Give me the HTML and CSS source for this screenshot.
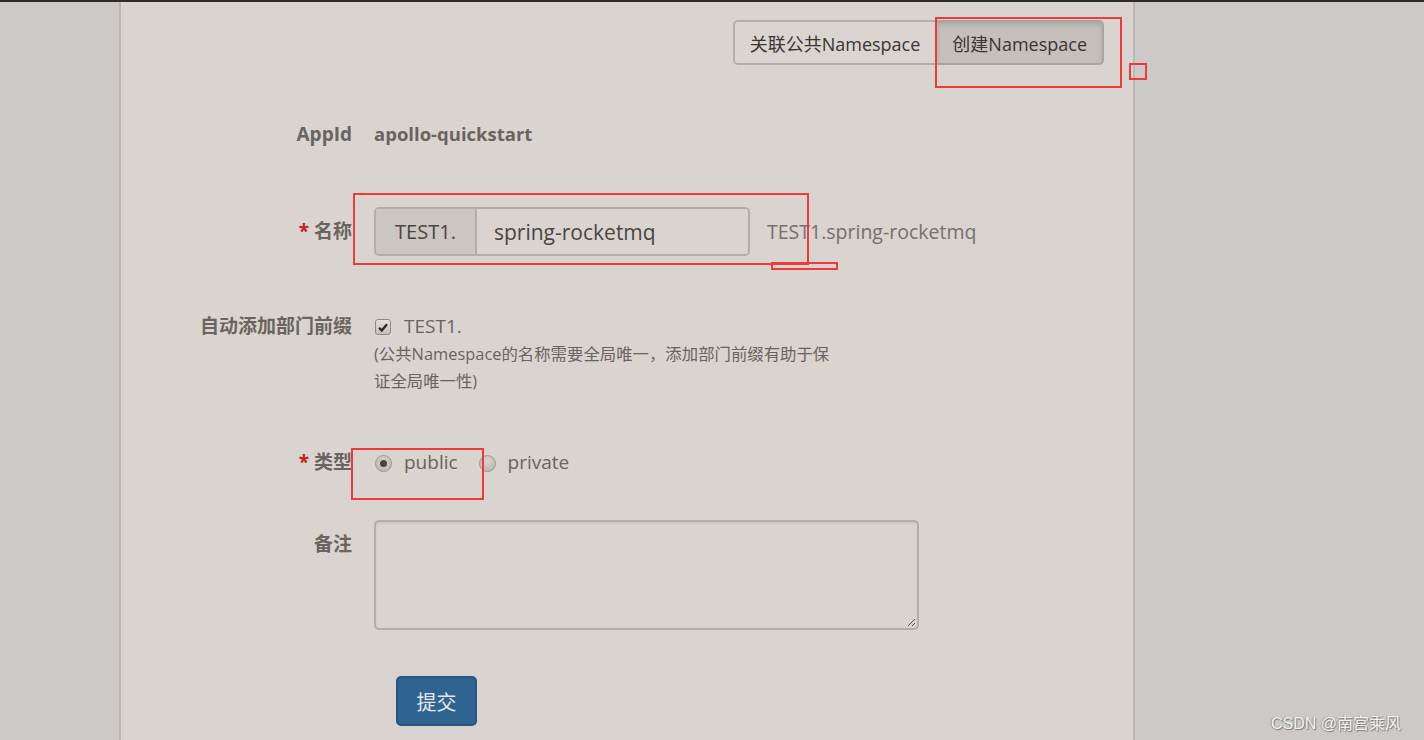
FILE: index.html
```html
<!DOCTYPE html>
<html lang="zh">
<head>
<meta charset="utf-8">
<title>创建Namespace</title>
<link rel="stylesheet" href="styles.css">
</head>
<body>
<div class="topbar"></div>
<div class="panel">
  <div class="header">
    <div class="btn-group">
      <button class="seg">关联公共Namespace</button>
      <button class="seg active">创建Namespace</button>
    </div>
  </div>
  <form class="form">
    <div class="row r-appid">
      <div class="label">AppId</div>
      <div class="value strong">apollo-quickstart</div>
    </div>
    <div class="row r-name">
      <div class="label tall"><span class="req">*</span> 名称</div>
      <div class="input-group">
        <span class="addon">TEST1.</span>
        <span class="ctrl">spring-rocketmq</span>
      </div>
      <div class="preview">TEST1.spring-rocketmq</div>
    </div>
    <div class="row r-prefix">
      <div class="label">自动添加部门前缀</div>
      <div class="value">
        <div class="check-line"><span class="checkbox"><svg viewBox="0 0 16 16" width="15" height="15"><path d="M3.5 8.3 6.6 11.4 12.6 4.2" fill="none" stroke="#2a2623" stroke-width="2.6"/></svg></span><span class="opt">TEST1.</span></div>
        <div class="help">(公共Namespace的名称需要全局唯一，添加部门前缀有助于保证全局唯一性)</div>
      </div>
    </div>
    <div class="row r-type">
      <div class="label"><span class="req">*</span> 类型</div>
      <div class="value radios">
        <span class="radio checked"></span><span class="opt">public</span>
        <span class="radio"></span><span class="opt">private</span>
      </div>
    </div>
    <div class="row r-comment">
      <div class="label top">备注</div>
      <div class="textarea"><svg class="grip" viewBox="0 0 10 10" width="10" height="10"><path d="M9 2 2 9M9 6 6 9" stroke="#555" stroke-width="1"/></svg></div>
    </div>
    <div class="row r-submit">
      <button type="button" class="submit">提交</button>
    </div>
  </form>
</div>
<div class="mark m1"></div>
<div class="mark m2"></div>
<div class="mark m3"></div>
<div class="mark m4"></div>
<div class="mark m5"></div>
<div class="watermark">CSDN @南宫乘风</div>
</body>
</html>
```
FILE: styles.css
```css
html, body {
  margin: 0;
  padding: 0;
}
body {
  background: #cdc9c7;
  font-family: "Open Sans", "Noto Sans CJK SC", sans-serif;
  color: #6a645f;
  width: 1424px;
  height: 740px;
  overflow: hidden;
  position: relative;
}
.topbar {
  height: 2px;
  background: #2f2b29;
}
.panel {
  margin-left: 119px;
  width: 1012px;
  height: 738px;
  background: #d9d4d0;
  border-left: 2px solid #bcb7b2;
  border-right: 2px solid #bcb7b2;
}
.header {
  display: flex;
  justify-content: flex-end;
  padding: 18px 29px 0 0;
}
.btn-group {
  display: flex;
}
.seg {
  font-family: inherit;
  font-size: 18px;
  height: 45px;
  padding: 0 15px;
  background: #dad5d1;
  color: #3a3532;
  border: 2px solid #b4afaa;
  border-radius: 5px 0 0 5px;
}
.seg.active {
  background: #c5c0bc;
  border-radius: 0 5px 5px 0;
  border-left: none;
  box-shadow: inset 0 3px 5px rgba(0,0,0,0.12);
  border-color: #a9a49f;
}
.form {
  display: flex;
  flex-direction: column;
}
.row {
  display: flex;
  align-items: flex-start;
}
.label {
  width: 231px;
  flex: none;
  text-align: right;
  font-weight: 700;
  font-size: 19px;
  line-height: 26px;
  color: #6a645f;
  margin-right: 22px;
}
.label.tall {
  line-height: 49px;
}
.label.top {
  padding-top: 11px;
}
.req {
  color: #c4221b;
}
.value {
  font-size: 18.5px;
  line-height: 26px;
}
.strong {
  font-weight: 700;
}
.r-appid {
  margin-top: 56px;
}
.r-name {
  margin-top: 60px;
}
.input-group {
  display: flex;
  width: 376px;
  height: 49px;
  box-sizing: border-box;
  border: 2px solid #b3aea9;
  border-radius: 5px;
  overflow: hidden;
  font-size: 21px;
  color: #4a4541;
}
.addon {
  width: 101px;
  flex: none;
  background: #cbc6c2;
  border-right: 2px solid #b3aea9;
  display: flex;
  align-items: center;
  justify-content: center;
  box-sizing: border-box;
  padding-left: 0;
  font-size: 20px;
}
.ctrl {
  display: flex;
  align-items: center;
  padding-left: 17px;
  background: #d9d4d0;
  flex: 1;
}
.preview {
  font-size: 19.5px;
  line-height: 49px;
  margin-left: 17px;
  color: #75706b;
}
.r-prefix {
  margin-top: 57px;
}
.check-line {
  display: flex;
  align-items: center;
  height: 26px;
}
.checkbox {
  width: 16px;
  height: 16px;
  box-sizing: border-box;
  border: 1px solid #8f8a85;
  border-radius: 3px;
  background: linear-gradient(#e4e0dc, #c3beba);
  display: inline-flex;
  align-items: center;
  justify-content: center;
  margin: 0 13px 0 1px;
  position: relative;
  top: 1px;
}
.checkbox svg {
  display: block;
}
.opt {
  font-size: 19px;
  color: #6a645f;
}
.help {
  width: 465px;
  font-size: 16.4px;
  line-height: 27px;
  margin-top: 1px;
  color: #6a645f;
}
.r-type {
  margin-top: 55px;
}
.radios {
  display: flex;
  align-items: center;
  height: 26px;
}
.radio {
  width: 17px;
  height: 17px;
  box-sizing: border-box;
  border-radius: 50%;
  border: 1px solid #9a958f;
  background: radial-gradient(circle at 50% 35%, #d8d3cf, #b7b2ae);
  margin: 0 12px 0 1px;
  position: relative;
  top: 1px;
  display: inline-flex;
  align-items: center;
  justify-content: center;
}
.radio.checked::after {
  content: "";
  width: 7px;
  height: 7px;
  border-radius: 50%;
  background: #4a4541;
}
.radios .opt + .radio {
  margin-left: 21px;
}
.r-comment {
  margin-top: 45px;
}
.textarea {
  width: 545px;
  height: 110px;
  box-sizing: border-box;
  border: 2px solid #b3aea9;
  border-radius: 5px;
  box-shadow: inset 0 2px 2px rgba(0,0,0,0.06);
  position: relative;
}
.grip {
  position: absolute;
  right: 1px;
  bottom: 1px;
}
.r-submit {
  margin-top: 46px;
  padding-left: 275px;
}
.submit {
  width: 81px;
  height: 50px;
  background: #2f6490;
  border: 2px solid #285680;
  border-radius: 5px;
  color: #e6e8ec;
  font-family: inherit;
  font-size: 20px;
}
.mark {
  position: absolute;
  border: 2px solid #f03a3a;
  box-sizing: border-box;
}
.m1 { left: 935px; top: 17px; width: 187px; height: 71px; }
.m2 { left: 1129px; top: 63px; width: 18px; height: 17px; }
.m3 { left: 353px; top: 193px; width: 456px; height: 72px; }
.m4 { left: 771px; top: 262px; width: 67px; height: 8px; }
.m5 { left: 351px; top: 448px; width: 133px; height: 52px; }
.watermark {
  position: absolute;
  left: 1271px;
  top: 710px;
  font-family: "Liberation Sans", "Noto Sans CJK SC", sans-serif;
  font-size: 16px;
  color: #f2f2f2;
  text-shadow: 1px 1px 1px #7a7a7a, -1px 0 1px #9a9a9a;
  white-space: nowrap;
}
```
